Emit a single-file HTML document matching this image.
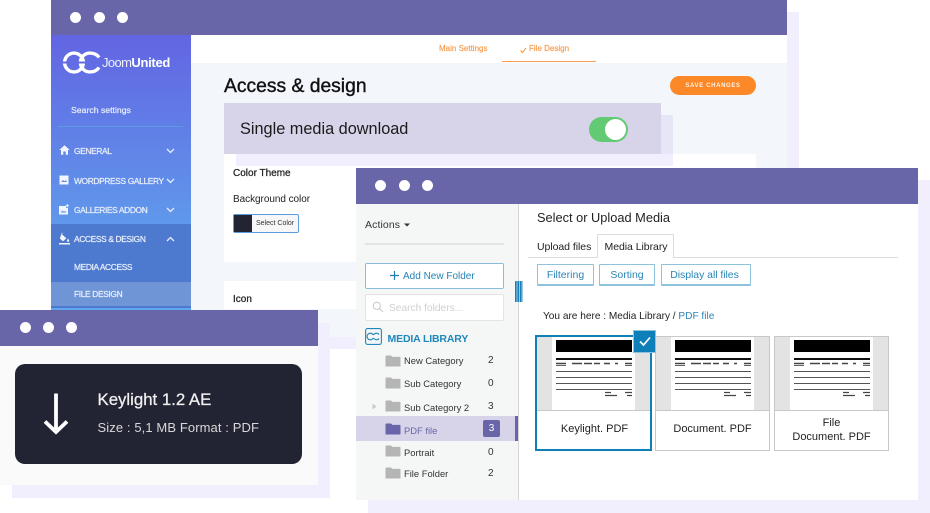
<!DOCTYPE html>
<html><head><meta charset="utf-8">
<style>
html,body{margin:0;padding:0;background:#fff}
#p{position:relative;width:930px;height:513px;overflow:hidden;background:#fff;font-family:"Liberation Sans",sans-serif;color:#222}
#p div,#p svg,#p span.a{position:absolute}
.t{white-space:nowrap;line-height:1}
.m{-webkit-text-stroke:.25px currentColor}
.dot{width:11px;height:11px;border-radius:50%;background:#fff}
.hd{background:#6965a9}
.nav{color:#e8eefb;font-size:8.4px;-webkit-text-stroke:.25px #e8eefb;letter-spacing:-.35px}
.chev{fill:none;stroke:#e8eefb;stroke-width:1.3}
.cat{font-size:9.4px;color:#333}
.n{font-size:10px;color:#333}
.bt{border:1px solid #8fc3dc;border-bottom-width:2px;box-sizing:border-box;color:#2a85b5;font-size:10.5px;text-align:center;background:#fff;border-radius:1px;line-height:20px}
.card{width:115px;height:115px;top:336px;box-sizing:border-box;background:#fff;border:1px solid #c8c8c8}
.doc{left:0;top:0;width:113px;height:73px;background:#e3e3e3}
.pg{left:15px;top:0;width:83px;height:73px;background:#fff}
.dv{left:0;top:73px;width:113px;height:1px;background:#c8c8c8}
.lab{left:0;width:113px;text-align:center;font-size:11px;color:#222;line-height:14px}
</style></head><body>
<div id="p">
<!-- window 1 shadow -->
<div style="left:63px;top:12px;width:736px;height:337px;background:#f1effd"></div>
<!-- window 1 -->
<div style="left:51px;top:0;width:736px;height:337px;background:#f3f6fb"></div>
<div class="hd" style="left:51px;top:0;width:736px;height:35px"></div>
<div class="dot" style="left:70px;top:12px"></div><div class="dot" style="left:94px;top:12px"></div><div class="dot" style="left:117px;top:12px"></div>
<div style="left:191px;top:35px;width:596px;height:28px;background:#fff"></div>
<div class="t" style="left:439px;top:45px;font-size:8px;color:#f99a4a;-webkit-text-stroke:.15px #f99a4a">Main Settings</div>
<svg style="left:519px;top:46px" width="9" height="8" viewBox="0 0 9 8"><path d="M1.5 4.5L3.5 6.5L7 2" fill="none" stroke="#f98a2e" stroke-width="1"/></svg>
<div class="t" style="left:529px;top:45px;font-size:8px;color:#f99a4a;-webkit-text-stroke:.15px #f99a4a">File Design</div>
<div style="left:502px;top:60.5px;width:94px;height:1.5px;background:#fb9c50"></div>
<div class="t m" style="left:224px;top:77px;font-size:19.3px;color:#111;-webkit-text-stroke:.4px #111">Access &amp; design</div>
<div style="left:670px;top:76px;width:86px;height:19px;border-radius:10px;background:#fd8827"></div>
<div class="t" style="left:670px;top:82.5px;width:86px;text-align:center;font-size:6px;font-weight:bold;color:#fff2e6;letter-spacing:.65px">SAVE CHANGES</div>
<!-- cards -->
<div style="left:224px;top:154px;width:532px;height:108px;background:#fff"></div>
<div style="left:224px;top:281px;width:532px;height:28px;background:#fff"></div>
<div style="left:236px;top:115px;width:437px;height:51px;background:#e6e6f6"></div>
<div style="left:236px;top:154px;width:437px;height:12px;background:#f1effd"></div>
<div style="left:224px;top:103px;width:437px;height:51px;background:#d7d4e9"></div>
<div class="t" style="left:240px;top:121px;font-size:16.3px;color:#1a1a1a">Single media download</div>
<div style="left:589px;top:116.5px;width:39px;height:25px;border-radius:13px;background:#63ca74"></div>
<div style="left:605px;top:118.5px;width:21px;height:21px;border-radius:50%;background:#fff"></div>
<div class="t m" style="left:233px;top:169px;font-size:10px;color:#222">Color Theme</div>
<div class="t" style="left:233px;top:195px;font-size:10px;color:#222;letter-spacing:-.05px">Background color</div>
<div style="left:233px;top:214px;width:66px;height:19px;box-sizing:border-box;border:1px solid #5d9bdc;border-radius:2px;background:#f7f7f7"></div>
<div style="left:234px;top:215px;width:18px;height:17px;background:#222433"></div>
<div class="t" style="left:256px;top:220px;font-size:7px;color:#333">Select Color</div>
<div class="t m" style="left:233px;top:295px;font-size:10px;color:#222">Icon</div>
<!-- sidebar -->
<div style="left:51px;top:35px;width:140px;height:189px;background:linear-gradient(#6265e2,#6098eb)"></div>
<div style="left:51px;top:224px;width:140px;height:86px;background:#4d79cf"></div>
<div style="left:51px;top:282px;width:140px;height:24px;background:#6f95d6"></div>
<div style="left:51px;top:308px;width:140px;height:2px;background:#62a6ee"></div>
<svg style="left:63px;top:50px" width="39" height="25" viewBox="0 0 39 25"><g fill="none" stroke="#fff" stroke-width="3.4"><circle cx="11" cy="12.5" r="9.4"/><path d="M36 7.5C34.3 4.8 31 3.1 26.8 3.1A9.4 9.4 0 0 0 26.8 21.9C31 21.9 34.3 20.2 36 17.5"/></g><rect x="0" y="11.5" width="5" height="2" fill="#6269e3"/><rect x="15" y="11.5" width="8" height="2" fill="#6269e3"/></svg>
<div class="t" style="left:102px;top:56px;font-size:13px;color:#fff"><span style="font-size:13px;letter-spacing:-.6px;opacity:.9">Joom</span><b style="letter-spacing:-.3px">United</b></div>
<div class="t" style="left:71px;top:106px;font-size:8.7px;color:#e8eefb;-webkit-text-stroke:.2px #e8eefb">Search settings</div>
<div style="left:58px;top:126px;width:125px;height:1px;background:#5d9ae4"></div>
<svg style="left:59px;top:145px" width="11" height="10" viewBox="0 0 11 10"><path d="M5.5 .3L.3 5H2V9.7H4.3V6.5H6.7V9.7H9V5H10.7Z" fill="#f2f5fd"/></svg>
<div class="t nav" style="left:74px;top:146.5px">GENERAL</div>
<svg class="chev" style="left:166px;top:148px" width="9" height="6"><path d="M1 1L4.5 4.5L8 1"/></svg>
<svg style="left:59px;top:175px" width="10" height="10" viewBox="0 0 10 10"><path d="M.5 .5H9.5V9.5H.5Z" fill="#f2f5fd"/><path d="M2 7L4 5L5.5 6.2L6.8 5L8 7Z" fill="#6090e8"/></svg>
<div class="t nav" style="left:74px;top:176.5px">WORDPRESS GALLERY</div>
<svg class="chev" style="left:166px;top:178px" width="9" height="6"><path d="M1 1L4.5 4.5L8 1"/></svg>
<svg style="left:59px;top:204px" width="11" height="11" viewBox="0 0 11 11"><path d="M0 2H7V4H9V10.5H0Z" fill="#f2f5fd"/><path d="M8.2 0V3.4M6.6 1.7H10" stroke="#f2f5fd" stroke-width="1"/><path d="M1.5 8.5L3.5 6.5L5 7.7L6 6.7L7.5 8.5Z" fill="#6098ea"/></svg>
<div class="t nav" style="left:74px;top:205.5px">GALLERIES ADDON</div>
<svg class="chev" style="left:166px;top:207px" width="9" height="6"><path d="M1 1L4.5 4.5L8 1"/></svg>
<svg style="left:59px;top:232px" width="11" height="13" viewBox="0 0 11 13"><path d="M3 .5L3.8 1.3L2.8 2.3L7.3 6.3L4.5 9H3.6L.8 6.4Z" fill="#f2f5fd"/><path d="M9 6.5C9.8 7.6 10.2 8.2 10.2 8.8A1.1 1.1 0 0 1 8 8.8C8 8.2 8.4 7.6 9 6.5Z" fill="#f2f5fd"/><rect y="11" width="11" height="1.5" fill="#f2f5fd"/></svg>
<div class="t nav" style="left:74px;top:234.5px">ACCESS &amp; DESIGN</div>
<svg class="chev" style="left:166px;top:236px" width="9" height="6"><path d="M1 5L4.5 1.5L8 5"/></svg>
<div class="t nav" style="left:74px;top:262.5px">MEDIA ACCESS</div>
<div class="t nav" style="left:74px;top:289.5px">FILE DESIGN</div>

<!-- window 2 shadow -->
<div style="left:368px;top:180px;width:562px;height:333px;background:#f1effd"></div>
<!-- window 2 -->
<div style="left:356px;top:204px;width:562px;height:296px;background:#fff"></div>
<div style="left:356px;top:204px;width:162px;height:296px;background:#f5f7f7"></div>
<div style="left:518px;top:204px;width:1px;height:296px;background:#d5d5d5"></div>
<div class="hd" style="left:356px;top:168px;width:562px;height:36px"></div>
<div class="dot" style="left:375px;top:180px"></div><div class="dot" style="left:399px;top:180px"></div><div class="dot" style="left:422px;top:180px"></div>
<div class="t" style="left:365px;top:220px;font-size:10.5px;color:#333;letter-spacing:.1px">Actions</div>
<svg style="left:404px;top:223px" width="6" height="4"><path d="M0 .5H6L3 3.5Z" fill="#333"/></svg>
<div style="left:365px;top:243px;width:139px;height:2px;background:#e3e4e4"></div>
<div style="left:365px;top:263px;width:139px;height:26px;box-sizing:border-box;border:1px solid #86bedb;border-radius:2px;background:#fff"></div>
<svg style="left:390px;top:271px" width="9" height="9"><path d="M4.5 0V9M0 4.5H9" stroke="#1f7fb4" stroke-width="1.2"/></svg>
<div class="t" style="left:403px;top:271.5px;font-size:10px;color:#2483b6">Add New Folder</div>
<div style="left:365px;top:294px;width:139px;height:27px;box-sizing:border-box;border:1px solid #e2e4e4;border-radius:2px;background:#fff"></div>
<svg style="left:372px;top:301px" width="12" height="12" viewBox="0 0 12 12"><circle cx="4.8" cy="4.8" r="3.6" fill="none" stroke="#ccc" stroke-width="1.1"/><path d="M7.5 7.5L11 11" stroke="#ccc" stroke-width="1.2"/></svg>
<div class="t" style="left:389px;top:304px;font-size:10.2px;color:#cdd0d2">Search folders...</div>
<div style="left:515px;top:281px;width:8px;height:21px;background:repeating-linear-gradient(90deg,#1a7fb8 0 1.5px,#9cc8e2 1.5px 2.6px)"></div>
<svg style="left:365px;top:328px" width="17" height="17" viewBox="0 0 17 17"><rect x=".6" y=".6" width="15.8" height="15.8" rx="2" fill="none" stroke="#1e87bc" stroke-width="1.1"/><g fill="none" stroke="#1e87bc" stroke-width="1.1"><path d="M8.3 7C7.6 5.8 6.6 5.2 5.4 5.2A3.3 3.3 0 0 0 5.4 11.8C6.6 11.8 7.6 11.2 8.3 10"/><path d="M8.5 7C9.3 5.8 10.3 5.2 11.5 5.2C12.7 5.2 13.5 5.8 14 6.6M14 10.4C13.5 11.2 12.7 11.8 11.5 11.8C10.3 11.8 9.3 11.2 8.5 10"/></g></svg>
<div class="t" style="left:387.5px;top:334px;font-size:10.5px;font-weight:bold;color:#1e87bc;letter-spacing:-.15px">MEDIA LIBRARY</div>

<svg style="left:385px;top:355px" width="16" height="12" viewBox="0 0 16 13" preserveAspectRatio="none"><path d="M.5 1.5Q.5 .5 1.5 .5H6L7.5 2H15Q15.5 2 15.5 3V12Q15.5 12.5 15 12.5H1Q.5 12.5 .5 12Z" fill="#b5b5b5"/></svg>
<div class="t cat" style="left:404px;top:356px">New Category</div><div class="t n" style="left:488px;top:356px">2</div>
<svg style="left:385px;top:377px" width="16" height="12" viewBox="0 0 16 13" preserveAspectRatio="none"><path d="M.5 1.5Q.5 .5 1.5 .5H6L7.5 2H15Q15.5 2 15.5 3V12Q15.5 12.5 15 12.5H1Q.5 12.5 .5 12Z" fill="#b5b5b5"/></svg>
<div class="t cat" style="left:404px;top:379px">Sub Category</div><div class="t n" style="left:488px;top:379px">0</div>
<svg style="left:372px;top:403px" width="5" height="7"><path d="M.5 .5L4.5 3.5L.5 6.5Z" fill="#c9c9c9"/></svg>
<svg style="left:385px;top:400px" width="16" height="12" viewBox="0 0 16 13" preserveAspectRatio="none"><path d="M.5 1.5Q.5 .5 1.5 .5H6L7.5 2H15Q15.5 2 15.5 3V12Q15.5 12.5 15 12.5H1Q.5 12.5 .5 12Z" fill="#b5b5b5"/></svg>
<div class="t cat" style="left:404px;top:403px">Sub Category 2</div><div class="t n" style="left:488px;top:402px">3</div>
<div style="left:356px;top:416px;width:160px;height:25px;background:#d7d4e9"></div>
<div style="left:515px;top:416px;width:3px;height:25px;background:#6965a9"></div>
<svg style="left:385px;top:423px" width="16" height="12" viewBox="0 0 16 13" preserveAspectRatio="none"><path d="M.5 1.5Q.5 .5 1.5 .5H6L7.5 2H15Q15.5 2 15.5 3V12Q15.5 12.5 15 12.5H1Q.5 12.5 .5 12Z" fill="#6965a9"/></svg>
<div class="t cat" style="left:404px;top:426px;color:#6965a9">PDF file</div>
<div style="left:483px;top:420px;width:17px;height:17px;border-radius:2px;background:#6965a9"></div>
<div class="t n" style="left:483px;top:424px;width:17px;text-align:center;color:#fff">3</div>
<svg style="left:385px;top:445px" width="16" height="12" viewBox="0 0 16 13" preserveAspectRatio="none"><path d="M.5 1.5Q.5 .5 1.5 .5H6L7.5 2H15Q15.5 2 15.5 3V12Q15.5 12.5 15 12.5H1Q.5 12.5 .5 12Z" fill="#b5b5b5"/></svg>
<div class="t cat" style="left:404px;top:448px">Portrait</div><div class="t n" style="left:488px;top:448px">0</div>
<svg style="left:385px;top:467px" width="16" height="12" viewBox="0 0 16 13" preserveAspectRatio="none"><path d="M.5 1.5Q.5 .5 1.5 .5H6L7.5 2H15Q15.5 2 15.5 3V12Q15.5 12.5 15 12.5H1Q.5 12.5 .5 12Z" fill="#b5b5b5"/></svg>
<div class="t cat" style="left:404px;top:469px">File Folder</div><div class="t n" style="left:488px;top:469px">2</div>

<div class="t" style="left:537px;top:212px;font-size:12.8px;color:#222">Select or Upload Media</div>
<div style="left:528px;top:257px;width:370px;height:1px;background:#dcdcdc"></div>
<div class="t" style="left:537px;top:242px;font-size:10.5px;color:#222;letter-spacing:-.05px">Upload files</div>
<div style="left:597px;top:234px;width:77px;height:24px;box-sizing:border-box;border:1px solid #dcdcdc;border-bottom:none;background:#fff"></div>
<div class="t" style="left:604.5px;top:242px;font-size:10.5px;color:#222;letter-spacing:-.05px">Media Library</div>
<div class="bt" style="left:537px;top:264px;width:57px;height:22px">Filtering</div>
<div class="bt" style="left:599px;top:264px;width:56px;height:22px">Sorting</div>
<div class="bt" style="left:661px;top:264px;width:90px;height:22px;letter-spacing:-.05px;padding-right:3px">Display all files</div>
<div class="t" style="left:543px;top:311.5px;font-size:10.1px;color:#222">You are here : Media Library / <span style="color:#2a85b5">PDF file</span></div>

<!-- cards -->
<div class="card" style="left:655px"><div class="doc"></div><div class="pg"></div>
<svg style="left:18px;top:2px" width="78" height="60" viewBox="0 0 78 60"><use href="#d"/></svg>
<div class="dv"></div><div class="t lab" style="top:85px">Document. PDF</div></div>
<div class="card" style="left:774px"><div class="doc"></div><div class="pg"></div>
<svg style="left:18px;top:2px" width="78" height="60" viewBox="0 0 78 60"><use href="#d"/></svg>
<div class="dv"></div><div class="lab" style="top:79px">File<br>Document. PDF</div></div>
<div class="card" style="left:535px;width:117px;height:116px;top:335px;border:2px solid #0f7fba"><div class="doc"></div><div class="pg"></div>
<svg style="left:18px;top:2px" width="78" height="60" viewBox="0 0 78 60"><defs><g id="d"><rect x="1" y="1" width="76" height="12" fill="#000"/><rect x="1" y="19" width="76" height="2" fill="#111"/><path d="M1 24.5H11M17 24.5H27M29 24.5H37M39 24.5H45M49 24.5H55M60 24.5H63M70 24.5H77" stroke="#444" stroke-width="1.4"/><path d="M1 26.5H11M70 26.5H77" stroke="#666" stroke-width="1"/><path d="M1 32.5H77M1 38.5H77M1 44.5H77M1 50.5H77" stroke="#555" stroke-width="1"/><path d="M50 53.5H56M70 53.5H77M50 56.5H62M72 56.5H77" stroke="#444" stroke-width="1.2"/></g></defs><use href="#d"/></svg>
<div class="dv"></div><div class="t lab" style="top:85px;left:1px">Keylight. PDF</div></div>
<div style="left:633px;top:330px;width:23px;height:23px;box-sizing:border-box;border:1px solid #8cc4e0;background:#0f7fba"></div>
<svg style="left:638px;top:335px" width="14" height="12" viewBox="0 0 14 12"><path d="M2 6.5L5.5 10L12 2.5" fill="none" stroke="#fff" stroke-width="1.7"/></svg>

<!-- window 3 -->
<div style="left:12px;top:323px;width:318px;height:175px;background:#f1effd"></div>
<div style="left:0;top:346px;width:318px;height:139px;background:#fafafa"></div>
<div class="hd" style="left:0;top:310px;width:318px;height:36px"></div>
<div class="dot" style="left:20px;top:322px"></div><div class="dot" style="left:43px;top:322px"></div><div class="dot" style="left:66px;top:322px"></div>
<div style="left:15px;top:364px;width:287px;height:100px;border-radius:10px;background:#222433"></div>
<svg style="left:42px;top:392px" width="28" height="45" viewBox="0 0 28 45"><path d="M14 1.5V40M3 29.5L14 40L25 29.5" fill="none" stroke="#fff" stroke-width="3.8"/></svg>
<div class="t m" style="left:97.5px;top:392px;font-size:16.8px;color:#f0f0f0">Keylight 1.2 AE</div>
<div class="t" style="left:97.5px;top:421px;font-size:13px;color:#d8d8d8;letter-spacing:.1px">Size : 5,1 MB Format : PDF</div>
</div>
</body></html>
